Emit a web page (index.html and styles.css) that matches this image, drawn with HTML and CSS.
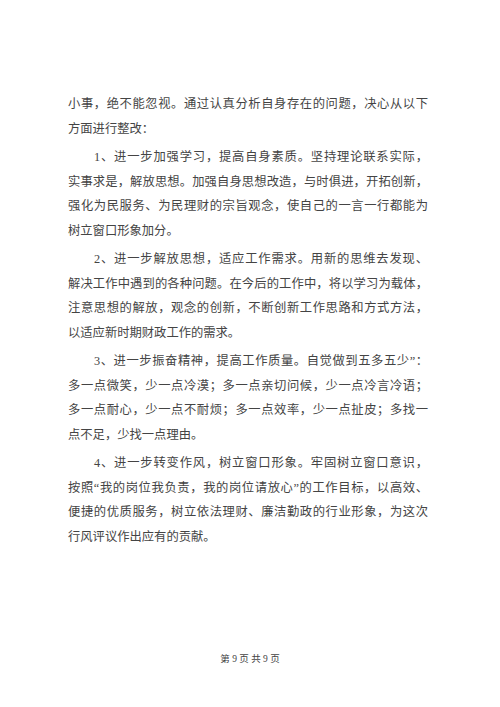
FILE: index.html
```html
<!DOCTYPE html>
<html lang="zh-CN">
<head>
    <meta charset="UTF-8">
    <meta name="viewport" content="width=device-width, initial-scale=1.0">
    <title>第9页</title>
    <link rel="stylesheet" href="styles.css">
</head>
<body>
    <div class="page">
        <div class="content">
            <p class="para">
                <span class="ln">小事，绝不能忽视。通过认真分析自身存在的问题，决心从以下</span>
                <span class="ln end">方面进行整改：</span>
            </p>
            <p class="para">
                <span class="ln indent">1、进一步加强学习，提高自身素质。坚持理论联系实际，</span>
                <span class="ln">实事求是，解放思想。加强自身思想改造，与时俱进，开拓创新，</span>
                <span class="ln">强化为民服务、为民理财的宗旨观念，使自己的一言一行都能为</span>
                <span class="ln end">树立窗口形象加分。</span>
            </p>
            <p class="para">
                <span class="ln indent">2、进一步解放思想，适应工作需求。用新的思维去发现、</span>
                <span class="ln">解决工作中遇到的各种问题。在今后的工作中，将以学习为载体，</span>
                <span class="ln">注意思想的解放，观念的创新，不断创新工作思路和方式方法，</span>
                <span class="ln end">以适应新时期财政工作的需求。</span>
            </p>
            <p class="para">
                <span class="ln indent">3、进一步振奋精神，提高工作质量。自觉做到五多五少”：</span>
                <span class="ln">多一点微笑，少一点冷漠；多一点亲切问候，少一点冷言冷语；</span>
                <span class="ln">多一点耐心，少一点不耐烦；多一点效率，少一点扯皮；多找一</span>
                <span class="ln end">点不足，少找一点理由。</span>
            </p>
            <p class="para">
                <span class="ln indent">4、进一步转变作风，树立窗口形象。牢固树立窗口意识，</span>
                <span class="ln">按照“我的岗位我负责，我的岗位请放心”的工作目标，以高效、</span>
                <span class="ln">便捷的优质服务，树立依法理财、廉洁勤政的行业形象，为这次</span>
                <span class="ln end">行风评议作出应有的贡献。</span>
            </p>
        </div>
        <div class="footer">第 9 页 共 9 页</div>
    </div>
</body>
</html>
```

FILE: styles.css
```css
body {
    margin: 0;
    background-color: #fff;
    font-family: "Liberation Serif", "Noto Sans CJK SC", serif;
    color: #444;
}

.page {
    width: 500px;
    height: 707px;
    display: flex;
    flex-direction: column;
}

.content {
    width: 360px;
    margin: 0 0 0 68px;
    padding-top: 92px;
    display: flex;
    flex-direction: column;
    gap: 4px;
}

.para {
    margin: 0;
    font-size: 12.3px;
    line-height: 24.5px;
}

.ln {
    display: block;
    white-space: nowrap;
    text-align: justify;
    text-align-last: justify;
}

.ln.end {
    text-align-last: left;
}

.ln.indent {
    padding-left: 26px;
}

.footer {
    margin-top: auto;
    margin-bottom: 42px;
    text-align: center;
    font-size: 9.5px;
    color: #444;
}
```
